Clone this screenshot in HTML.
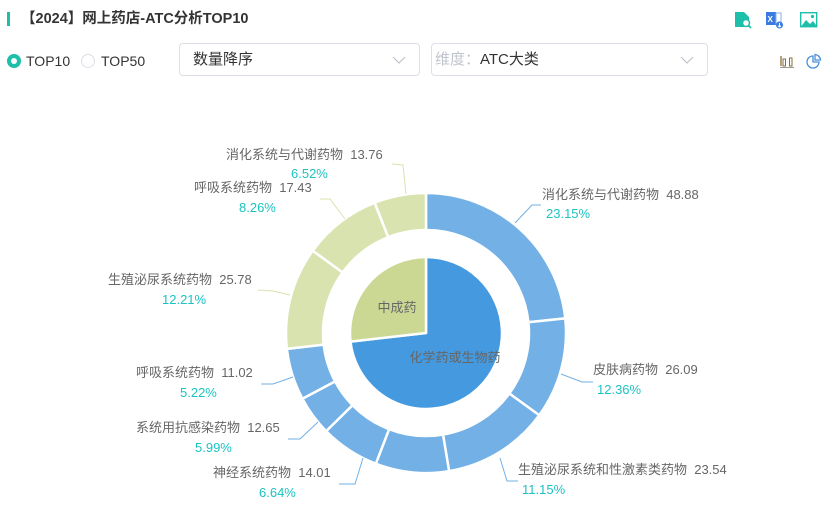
<!DOCTYPE html>
<html><head><meta charset="utf-8">
<style>
*{margin:0;padding:0;box-sizing:border-box}
body{width:826px;height:532px;background:#fff;font-family:"Liberation Sans","Noto Sans CJK SC",sans-serif;position:relative;overflow:hidden;color:#333}
.a{position:absolute;white-space:nowrap}
.sel{position:absolute;border:1px solid #dcdfe6;border-radius:4px;height:33px;top:43px;background:#fff}
.lb{position:absolute;white-space:nowrap;font-size:13px;color:#666;line-height:16px}
.pc{position:absolute;white-space:nowrap;font-size:13px;color:#1cc3c3;line-height:16px}
</style></head><body>
<div class="a" style="left:7px;top:12px;width:3px;height:14px;background:#1dbfa8"></div>
<div class="a" style="left:21px;top:10px;font-size:14.5px;font-weight:bold;color:#333;line-height:18px">【2024】网上药店-ATC分析TOP10</div>

<div class="a" style="left:7px;top:54px;width:14px;height:14px;border-radius:50%;background:#1dbfa8"></div>
<div class="a" style="left:11px;top:58px;width:6px;height:6px;border-radius:50%;background:#fff"></div>
<div class="a" style="left:26px;top:52px;font-size:14px;color:#333;line-height:18px">TOP10</div>
<div class="a" style="left:81px;top:54px;width:14px;height:14px;border-radius:50%;border:1px solid #dcdfe6"></div>
<div class="a" style="left:101px;top:52px;font-size:14px;color:#333;line-height:18px">TOP50</div>

<div class="sel" style="left:179px;width:241px"><span class="a" style="left:13px;top:6px;font-size:15px;color:#333;line-height:20px">数量降序</span>
<svg class="a" style="left:212px;top:11px" width="14" height="10"><path d="M1 2 L7 8 L13 2" fill="none" stroke="#c0c4cc" stroke-width="1.2"/></svg></div>
<div class="sel" style="left:431px;width:277px"><span class="a" style="left:3px;top:6px;font-size:15px;color:#c0c4cc;line-height:20px">维度：</span><span class="a" style="left:48px;top:6px;font-size:15px;color:#333;line-height:20px">ATC大类</span>
<svg class="a" style="left:248px;top:11px" width="14" height="10"><path d="M1 2 L7 8 L13 2" fill="none" stroke="#c0c4cc" stroke-width="1.2"/></svg></div>

<svg class="a" style="left:734px;top:11px" width="18" height="18"><path d="M1 1 H10 L15 6 V16 H1 Z" fill="#1dbfa8"/><circle cx="12" cy="12" r="3.5" fill="#fff" stroke="#1dbfa8" stroke-width="1.5"/><path d="M14.5 14.5 L17 17" stroke="#1dbfa8" stroke-width="1.6"/></svg>
<svg class="a" style="left:766px;top:11px" width="18" height="18"><rect x="0" y="1" width="10" height="13" fill="#3b7be0"/><text x="1.5" y="11" font-size="8" fill="#fff" font-family="Liberation Sans" font-weight="bold">X</text><rect x="10" y="2" width="5" height="11" fill="none" stroke="#8ab0ee" stroke-width="1"/><circle cx="13.5" cy="14" r="3.5" fill="#3b7be0"/><path d="M13.5 12 V16 M12 14.8 L13.5 16 L15 14.8" stroke="#fff" stroke-width="1" fill="none"/></svg>
<svg class="a" style="left:800px;top:12px" width="18" height="16"><rect x="0.7" y="0.7" width="16" height="14" fill="none" stroke="#1dbfa8" stroke-width="1.4"/><path d="M1.5 14 L6 8 L10 12 L13 9 L16 13 V14 Z" fill="#1dbfa8"/><circle cx="12.5" cy="4.5" r="1.6" fill="#1dbfa8"/></svg>

<svg class="a" style="left:779px;top:53px" width="16" height="16"><path d="M2 3 V13" stroke="#8a6e3c" stroke-width="1.3" fill="none"/><path d="M1 14.5 H15" stroke="#999" stroke-width="1"/><rect x="4" y="6" width="2.5" height="7" fill="none" stroke="#8a6e3c" stroke-width="1"/><rect x="10.5" y="5" width="2.5" height="8" fill="none" stroke="#8a6e3c" stroke-width="1"/></svg>
<svg class="a" style="left:806px;top:53px" width="16" height="16"><path d="M7 3 A6 6 0 1 0 13 9 H7 Z" fill="none" stroke="#4a90d9" stroke-width="1.3"/><path d="M9 1.5 A6 6 0 0 1 14.5 7 H9 Z" fill="none" stroke="#4a90d9" stroke-width="1.3"/></svg>

<svg class="a" style="left:0;top:0" width="826" height="532" id="ch">
<g id="g"></g>
<g fill="none" stroke-width="1">
<polyline points="515,223 532,205 541,205" stroke="#72b0e6"/>
<polyline points="561,374 582,382 593,382" stroke="#72b0e6"/>
<polyline points="500,458 507,481 518,481" stroke="#72b0e6"/>
<polyline points="363,458 355,484 339,484" stroke="#72b0e6"/>
<polyline points="318,422 300,439 288,439" stroke="#72b0e6"/>
<polyline points="293,377 273,384 261,384" stroke="#72b0e6"/>
<polyline points="290,295 273,291 258,290" stroke="#d9e3b0"/>
<polyline points="345,219 330,199 320,199" stroke="#d9e3b0"/>
<polyline points="406,194 403,165 392,164" stroke="#d9e3b0"/>
</g>
<text x="397" y="312" font-size="13" fill="#666" text-anchor="middle" font-family="Liberation Sans,Noto Sans CJK SC,sans-serif">中成药</text>
<text x="455" y="362" font-size="13" fill="#666" text-anchor="middle" font-family="Liberation Sans,Noto Sans CJK SC,sans-serif">化学药或生物药</text>
</svg>

<div class="lb" style="left:542px;top:187px">消化系统与代谢药物&nbsp;&nbsp;48.88</div><div class="pc" style="left:546px;top:206px">23.15%</div>
<div class="lb" style="left:593px;top:362px">皮肤病药物&nbsp;&nbsp;26.09</div><div class="pc" style="left:597px;top:382px">12.36%</div>
<div class="lb" style="left:518px;top:462px">生殖泌尿系统和性激素类药物&nbsp;&nbsp;23.54</div><div class="pc" style="left:522px;top:482px">11.15%</div>
<div class="lb" style="left:213px;top:465px">神经系统药物&nbsp;&nbsp;14.01</div><div class="pc" style="left:259px;top:485px">6.64%</div>
<div class="lb" style="left:136px;top:420px">系统用抗感染药物&nbsp;&nbsp;12.65</div><div class="pc" style="left:195px;top:440px">5.99%</div>
<div class="lb" style="left:136px;top:365px">呼吸系统药物&nbsp;&nbsp;11.02</div><div class="pc" style="left:180px;top:385px">5.22%</div>
<div class="lb" style="left:108px;top:272px">生殖泌尿系统药物&nbsp;&nbsp;25.78</div><div class="pc" style="left:162px;top:292px">12.21%</div>
<div class="lb" style="left:194px;top:180px">呼吸系统药物&nbsp;&nbsp;17.43</div><div class="pc" style="left:239px;top:200px">8.26%</div>
<div class="lb" style="left:226px;top:147px">消化系统与代谢药物&nbsp;&nbsp;13.76</div><div class="pc" style="left:291px;top:166px">6.52%</div>

<script>
(function(){
var cx=426,cy=333,g=document.getElementById('g'),ns='http://www.w3.org/2000/svg';
function pt(r,a){a=a*Math.PI/180;return [cx+r*Math.sin(a),cy-r*Math.cos(a)];}
function add(d,f){var p=document.createElementNS(ns,'path');p.setAttribute('d',d);p.setAttribute('fill',f);p.setAttribute('stroke','#fff');p.setAttribute('stroke-width','2.5');p.setAttribute('stroke-linejoin','round');g.appendChild(p);}
function ring(r0,r1,a0,a1,f){var l=(a1-a0)>180?1:0,A=pt(r1,a0),B=pt(r1,a1),C=pt(r0,a1),D=pt(r0,a0);
add('M'+A+' A'+r1+' '+r1+' 0 '+l+' 1 '+B+' L'+C+' A'+r0+' '+r0+' 0 '+l+' 0 '+D+' Z',f);}
function pie(r,a0,a1,f){var l=(a1-a0)>180?1:0,A=pt(r,a0),B=pt(r,a1);add('M'+cx+','+cy+' L'+A+' A'+r+' '+r+' 0 '+l+' 1 '+B+' Z',f);}
var b=[0,84,126,170.5,201,225.5,242,263.5,306,338.5,360];
for(var i=0;i<10;i++)ring(103,140,b[i],b[i+1],i<7?'#72b0e6':'#d9e3b0');
pie(76,0,263.5,'#4499df');pie(76,263.5,360,'#cad893');
})();
</script>
</body></html>
